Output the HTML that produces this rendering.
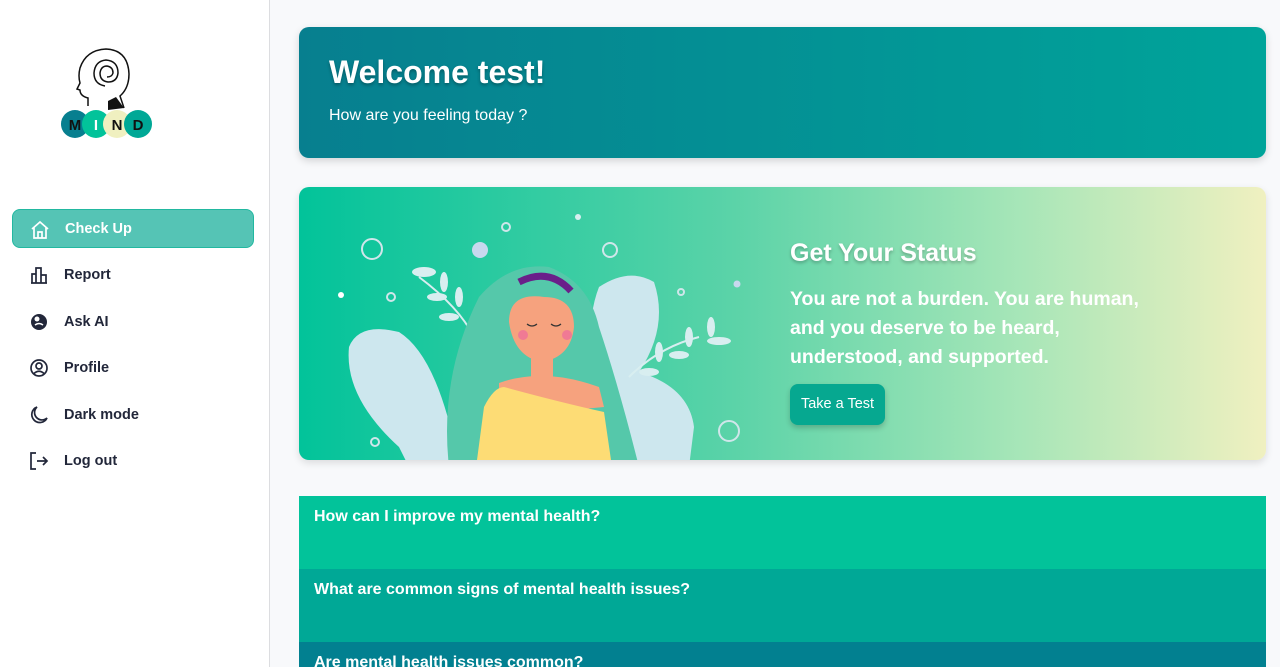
<!DOCTYPE html>
<html><head><meta charset="utf-8"><style>
*{box-sizing:border-box;margin:0;padding:0}
html,body{width:1280px;height:667px;overflow:hidden}
body{background:#f8f9fb;font-family:"Liberation Sans",sans-serif;position:relative}
.side{position:absolute;left:0;top:0;width:270px;height:667px;background:#fff;border-right:1px solid #dcdde0}
.nav{position:absolute;left:12px;width:242px;height:39px;display:flex;align-items:center;font-weight:bold;font-size:14.5px;color:#22273a}
.nav svg{position:absolute;left:17px;top:10px}
.nav span{position:absolute;left:52px}
.act{background:#55c4b5;border:1px solid #22b8a0;border-radius:8px;color:#fff}
.card1{position:absolute;left:299px;top:27px;width:967px;height:131px;border-radius:10px;background:linear-gradient(90deg,#077f8f,#00a49a);box-shadow:0 3px 8px rgba(0,0,0,.15);color:#fff}
.card1 h1{position:absolute;left:30px;top:27px;font-size:32px;text-shadow:0 2px 3px rgba(0,0,0,.3)}
.card1 p{position:absolute;left:30px;top:80px;font-size:16px}
.card2{position:absolute;left:299px;top:187px;width:967px;height:273px;border-radius:10px;overflow:hidden;background:linear-gradient(90deg,#02c39a 0%,#5bd3a8 45%,#a8e6b8 75%,#f0f0c0 100%);box-shadow:0 3px 8px rgba(0,0,0,.12)}
.card2 h2{position:absolute;left:491px;top:52px;color:#fff;font-size:25px;text-shadow:0 2px 3px rgba(0,0,0,.25)}
.card2 .q{position:absolute;left:491px;top:98px;width:385px;color:#fff;font-size:19.5px;font-weight:bold;line-height:29px}
.btn{position:absolute;left:491px;top:197px;width:95px;height:41px;border-radius:8px;background:#06a890;color:#fff;font-size:14.5px;line-height:41px;text-align:center;box-shadow:0 3px 6px rgba(0,0,0,.2)}
.faq{position:absolute;left:299px;width:967px;height:73px;color:#fff;font-weight:bold;font-size:16px;padding:12px 15px;overflow:hidden}
</style></head><body>
<div class="side">
<svg style="position:absolute;left:58px;top:46px" width="96" height="94" viewBox="0 0 96 94">
<path d="M30 60 L30 52 Q22 50 22 44 L19 43 L22 37 Q20 30 22 22 Q28 4 48 3 Q70 4 71 28 Q71 42 62 50 L66 62" fill="none" stroke="#111" stroke-width="1.5"/>
<path d="M47 40 Q36 38 36 27 Q37 15 48 14 Q60 15 60 27 Q59 36 50 36 Q42 35 42 27 Q43 20 49 20 Q55 21 55 27 Q54 31 49 31" fill="none" stroke="#111" stroke-width="1.5"/>
<path d="M50 55 L58 51 L66 62 L50 64Z" fill="#111"/>
<circle cx="17" cy="78" r="14" fill="#077f8f"/><circle cx="38" cy="78" r="14" fill="#02c39a"/><circle cx="59" cy="78" r="14" fill="#f0f0c0"/><circle cx="80" cy="78" r="14" fill="#00a896"/>
<text x="17" y="84" font-size="15" font-weight="bold" text-anchor="middle" fill="#111">M</text><text x="38" y="84" font-size="15" font-weight="bold" text-anchor="middle" fill="#fff">I</text><text x="59" y="84" font-size="15" font-weight="bold" text-anchor="middle" fill="#111">N</text><text x="80" y="84" font-size="15" font-weight="bold" text-anchor="middle" fill="#111">D</text>
</svg>
<div class="nav act" style="top:209px"><svg width="20" height="20" viewBox="0 0 20 20" fill="none" stroke="#fff" stroke-width="1.7"><path d="M2 9 L10 2 L18 9 M4 7.5 V18 H16 V7.5 M8 18 V12 H12 V18"/></svg><span>Check Up</span></div>
<div class="nav" style="top:255px"><svg width="20" height="20" viewBox="0 0 20 20" fill="none" stroke="#22273a" stroke-width="1.7"><path d="M2 18 H18 M3 18 V9 H7 V18 M7 18 V3 H12 V18 M12 18 V10 H17 V18"/></svg><span>Report</span></div>
<div class="nav" style="top:302px"><svg width="20" height="20" viewBox="0 0 20 20"><circle cx="10" cy="10" r="8" fill="#22273a"/><circle cx="8" cy="7" r="2.5" fill="#fff"/><path d="M6 13 Q10 10 14 13" stroke="#fff" stroke-width="1.5" fill="none"/></svg><span>Ask AI</span></div>
<div class="nav" style="top:348px"><svg width="20" height="20" viewBox="0 0 20 20" fill="none" stroke="#22273a" stroke-width="1.7"><circle cx="10" cy="10" r="8"/><circle cx="10" cy="8" r="3"/><path d="M5 15.5 Q10 11 15 15.5"/></svg><span>Profile</span></div>
<div class="nav" style="top:395px"><svg width="20" height="20" viewBox="0 0 20 20" fill="none" stroke="#22273a" stroke-width="1.7"><path d="M8 2 A8 8 0 1 0 18 13 A7 7 0 0 1 8 2Z"/></svg><span>Dark mode</span></div>
<div class="nav" style="top:441px"><svg width="20" height="20" viewBox="0 0 20 20" fill="none" stroke="#22273a" stroke-width="1.7"><path d="M7 2 H2 V18 H7 M8 10 H18 M14 6 L18 10 L14 14"/></svg><span>Log out</span></div>
</div>
<div class="card1"><h1>Welcome test!</h1><p>How are you feeling today ?</p></div>
<div class="card2">
<svg style="position:absolute;left:0;top:0" width="480" height="273" viewBox="0 0 480 273">
<g fill="none" stroke="#cfe6ea" stroke-width="2"><circle cx="73" cy="62" r="10"/><circle cx="207" cy="40" r="4"/><circle cx="311" cy="63" r="7"/><circle cx="92" cy="110" r="4"/><circle cx="382" cy="105" r="3"/><circle cx="430" cy="244" r="10"/><circle cx="76" cy="255" r="4"/></g>
<circle cx="181" cy="63" r="8" fill="#c8d8ee"/><circle cx="279" cy="30" r="3" fill="#d8eef0"/><circle cx="42" cy="108" r="3" fill="#fff"/><circle cx="438" cy="97" r="3.5" fill="#c8d8ee"/>
<path d="M160 280 Q140 170 100 145 Q60 135 50 160 Q45 210 100 260 L110 280Z" fill="#cde7ee"/>
<path d="M300 280 Q280 150 300 100 Q330 80 355 95 Q370 140 340 185 Q390 200 395 240 L390 280Z" fill="#cde7ee"/>
<path d="M120 90 Q160 120 175 150 M400 150 Q360 160 330 190" stroke="#d8eef0" stroke-width="2" fill="none"/>
<g fill="#d8eef0"><ellipse cx="125" cy="85" rx="12" ry="5"/><ellipse cx="145" cy="95" rx="4" ry="10"/><ellipse cx="138" cy="110" rx="10" ry="4"/><ellipse cx="160" cy="110" rx="4" ry="10"/><ellipse cx="150" cy="130" rx="10" ry="4"/><ellipse cx="175" cy="135" rx="4" ry="9"/><ellipse cx="420" cy="154" rx="12" ry="4"/><ellipse cx="412" cy="140" rx="4" ry="10"/><ellipse cx="390" cy="150" rx="4" ry="10"/><ellipse cx="380" cy="168" rx="10" ry="4"/><ellipse cx="360" cy="165" rx="4" ry="10"/><ellipse cx="350" cy="185" rx="10" ry="4"/></g>
<path d="M150 280 Q140 190 180 110 Q210 75 250 80 Q290 95 300 140 Q320 200 340 280Z" fill="#55c8aa"/>
<path d="M220 95 Q250 80 272 104" stroke="#6a1f8a" stroke-width="7" fill="none"/>
<path d="M210 135 Q210 105 245 110 Q275 110 275 140 Q272 170 243 175 Q215 170 210 135Z" fill="#f6a27e"/>
<rect x="232" y="168" width="22" height="22" fill="#f6a27e"/>
<circle cx="224" cy="148" r="5" fill="#f07a94"/><circle cx="268" cy="148" r="5" fill="#f07a94"/>
<path d="M228 137 Q233 141 238 137 M252 137 Q257 141 262 137" stroke="#333" stroke-width="1.2" fill="none"/>
<path d="M200 196 Q245 180 300 200 L305 220 L200 230Z" fill="#f6a27e"/>
<path d="M178 273 L185 220 Q195 200 205 200 Q260 215 305 225 L312 273Z" fill="#fddc75"/>
</svg>
<h2>Get Your Status</h2>
<div class="q">You are not a burden. You are human, and you deserve to be heard, understood, and supported.</div>
<div class="btn">Take a Test</div>
</div>
<div class="faq" style="top:496px;background:#02c39a">How can I improve my mental health?</div>
<div class="faq" style="top:569px;background:#00a896">What are common signs of mental health issues?</div>
<div class="faq" style="top:642px;height:25px;background:#028090">Are mental health issues common?</div>
</body></html>
